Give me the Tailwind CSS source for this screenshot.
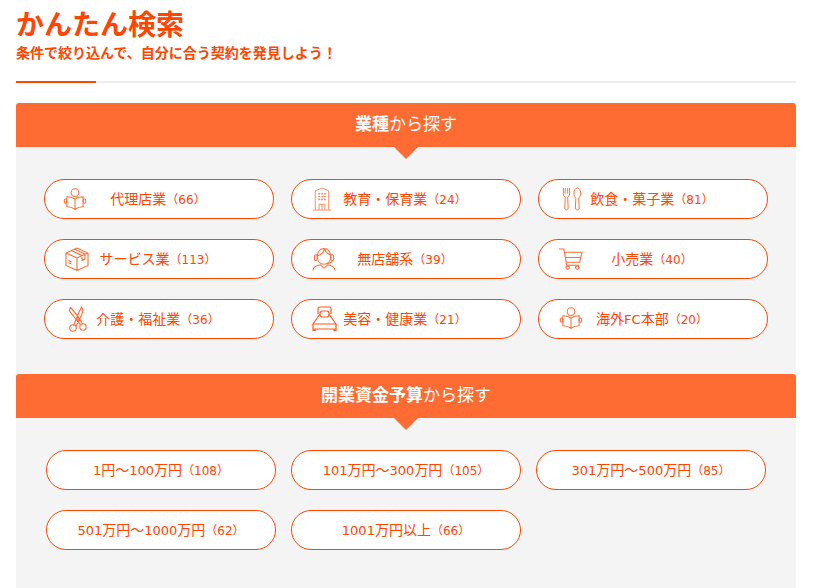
<!DOCTYPE html>
<html lang="ja">
<head>
<meta charset="UTF-8">
<title>かんたん検索</title>
<script src="https://cdn.jsdelivr.net/npm/@tailwindcss/browser@4"></script>
</head>
<body class="bg-white text-[#ff4500] font-['DejaVu_Sans','Noto_Sans_CJK_JP',sans-serif] overflow-hidden h-[588px]">
<div class="w-[780px] ml-4">

  <div class="h-[83px] border-b-2 border-[#eeeeee] relative">
    <h1 class="text-[28px] font-bold leading-[40px] pt-[6px] box-content">かんたん検索</h1>
    <p class="text-[14px] font-bold leading-[20px] mt-[-3px]">条件で絞り込んで、自分に合う契約を発見しよう！</p>
    <div class="absolute left-0 bottom-[-2px] w-20 h-0.5 bg-[#ff4500]"></div>
  </div>

  <!-- 業種 -->
  <section class="mt-5 bg-[#f4f4f4] h-[271px]">
    <div class="relative h-11 bg-[#ff6c33] rounded-t-[3px] flex items-center justify-center text-white text-[17px]">
      <p><span class="font-bold">業種</span>から探す</p>
      <div class="absolute left-1/2 -translate-x-1/2 top-full w-0 h-0 border-x-[12px] border-x-transparent border-t-[12px] border-t-[#ff6c33]"></div>
    </div>
    <div class="grid grid-cols-[230px_230px_230px] gap-x-[17px] gap-y-5 pl-7 pt-8">

      <a class="relative h-10 bg-white border border-[#ff4500] rounded-[20px] flex items-center justify-center pr-0.5 text-[14px]">
        <svg class="absolute left-[18px] top-[7px] w-6 h-6" viewBox="0 0 28 28" fill="none" stroke="#ff6c33" stroke-width="1.200"><circle cx="14" cy="6.500" r="4.500"/><path d="M14 14v12M14 14c-3-2-6-2.500-9.500-2.500v11.500c3.500 0 6.500.5 9.500 3 3-2.500 6-3 9.500-3V11.500C20 11.500 17 12 14 14z"/><rect x="1.500" y="14" width="3" height="5" rx="1.500"/><rect x="23.500" y="14" width="3" height="5" rx="1.500"/></svg>
        <span>代理店業<span class="text-[12px]">（66）</span></span>
      </a>

      <a class="relative h-10 bg-white border border-[#ff4500] rounded-[20px] flex items-center justify-center pr-0.5 text-[14px]">
        <svg class="absolute left-[20px] top-[7px] w-5 h-6" viewBox="0 0 20 25" fill="none" stroke="#ff8a5c" stroke-width="1"><path d="M3 24V4l7-3 7 3v20M0.500 24h19M7 24v-6h6v6M10 18v6"/><path d="M6 7h2M9 7h2M12 7h2M6 10h2M9 10h2M12 10h2M6 13h2M9 13h2M12 13h2" stroke-width="1.500"/></svg>
        <span>教育・保育業<span class="text-[12px]">（24）</span></span>
      </a>

      <a class="relative h-10 bg-white border border-[#ff4500] rounded-[20px] flex items-center justify-center pr-0.5 text-[14px]">
        <svg class="absolute left-[23px] top-[7px] w-5 h-6" viewBox="0 0 20 25" fill="none" stroke="#ff6c33" stroke-width="1"><path d="M1 1v6c0 2 1.500 3 2 4l-.5 11c0 2.500 3.500 2.500 3.500 0L5.500 11c.5-1 2-2 2-4V1M3 1v6M5.500 1v6"/><path d="M15.500 1c-2 0-3.500 2.500-3.500 5.500 0 2.500 1 4 2 5l-.5 10.500c0 2.500 4 2.500 4 0L17 11.500c1-1 2-2.500 2-5C19 3.500 17.500 1 15.500 1z"/></svg>
        <span>飲食・菓子業<span class="text-[12px]">（81）</span></span>
      </a>

      <a class="relative h-10 bg-white border border-[#ff4500] rounded-[20px] flex items-center justify-center pr-0.5 text-[14px]">
        <svg class="absolute left-[20px] top-[7px] w-6 h-6" viewBox="0 0 24 24" fill="none" stroke="#ff6c33" stroke-width="1.100"><path d="M1 6l11-5 11 5v12.500L12 23.500 1 18.500zM1 6l11 5 11-5M12 11v12.500M6 3.500l11 5M9 2l11 5M17 8.500v5l3-1.500V7"/><path d="M3.500 15.500l3 1.500M3.500 13.500l3 1.500"/></svg>
        <span>サービス業<span class="text-[12px]">（113）</span></span>
      </a>

      <a class="relative h-10 bg-white border border-[#ff4500] rounded-[20px] flex items-center justify-center pr-0.5 text-[14px]">
        <svg class="absolute left-[20px] top-[7px] w-6 h-6" viewBox="0 0 25 25" fill="none" stroke="#ff6c33" stroke-width="1.100"><path d="M5.500 10c0-5 3-8.500 7-8.500s7 3.500 7 8.500c0 5-3 8-7 8s-7-3-7-8zM13 2c-1 4-3 6-7 7M13 2c1 3 3 5 6 6"/><rect x="2.500" y="8" width="3" height="6" rx="1.500"/><rect x="19.500" y="8" width="3" height="6" rx="1.500"/><path d="M21 14c0 2-3 3-6 3M1 24.500c0-3 1.500-4 4-5l3.500-1 4 3.500 4-3.500 3.500 1c2.500 1 4 2 4 5"/></svg>
        <span>無店舗系<span class="text-[12px]">（39）</span></span>
      </a>

      <a class="relative h-10 bg-white border border-[#ff4500] rounded-[20px] flex items-center justify-center pr-0.5 text-[14px]">
        <svg class="absolute left-[20px] top-[8px] w-6 h-[22px]" viewBox="0 0 25 23" fill="none" stroke="#ff6c33" stroke-width="1.100"><path d="M0 1h5l3 17h13M6 4.500h18L21.500 15H7.500M7 10h15.500"/><circle cx="9" cy="20.500" r="1.800"/><circle cx="19" cy="20.500" r="1.800"/></svg>
        <span>小売業<span class="text-[12px]">（40）</span></span>
      </a>

      <a class="relative h-10 bg-white border border-[#ff4500] rounded-[20px] flex items-center justify-center pr-0.5 text-[14px]">
        <svg class="absolute left-[23px] top-[6px] w-[19px] h-[26px]" viewBox="0 0 19 26" fill="none" stroke="#ff6c33" stroke-width="1.100"><path d="M5.500 19.500C8 14 10 8 13.500 1c2 2.500 1.500 6-.5 9L8 20.500M12.500 19L1.500 5C1.500 3 2 2 2.500 1.500 6 5 10 10 14.500 18"/><circle cx="5" cy="22" r="3.200"/><circle cx="15" cy="21" r="3.200"/><circle cx="9.500" cy="13.500" r=".8"/></svg>
        <span>介護・福祉業<span class="text-[12px]">（36）</span></span>
      </a>

      <a class="relative h-10 bg-white border border-[#ff4500] rounded-[20px] flex items-center justify-center pr-0.5 text-[14px]">
        <svg class="absolute left-[20px] top-[6px] w-[25px] h-[25px]" viewBox="0 0 25 25" fill="none" stroke="#ff5a1f" stroke-width="1.200"><path d="M6 8V2.500C6 1.500 6.500 1 7.500 1h10c1 0 1.500.5 1.500 1.500V8"/><rect x="8" y="5" width="9" height="6" rx="2.500"/><path d="M8 8L1 18h23L17 8M1 18v5h23v-5M1 23v1.500h2V23M22 23v1.500h2V23"/></svg>
        <span>美容・健康業<span class="text-[12px]">（21）</span></span>
      </a>

      <a class="relative h-10 bg-white border border-[#ff4500] rounded-[20px] flex items-center justify-center pr-0.5 text-[14px]">
        <svg class="absolute left-[20px] top-[6px] w-6 h-6" viewBox="0 0 28 28" fill="none" stroke="#ff6c33" stroke-width="1.200"><circle cx="14" cy="6.500" r="4.500"/><path d="M14 14v12M14 14c-3-2-6-2.500-9.500-2.500v11.500c3.500 0 6.500.5 9.500 3 3-2.500 6-3 9.500-3V11.500C20 11.500 17 12 14 14z"/><rect x="1.500" y="14" width="3" height="5" rx="1.500"/><rect x="23.500" y="14" width="3" height="5" rx="1.500"/></svg>
        <span>海外<span class="text-[13px]">FC</span>本部<span class="text-[12px]">（20）</span></span>
      </a>
    </div>
  </section>

  <!-- 開業資金予算 -->
  <section class="bg-[#f4f4f4] h-[214px]">
    <div class="relative h-11 bg-[#ff6c33] rounded-t-[3px] flex items-center justify-center text-white text-[17px]">
      <p><span class="font-bold">開業資金予算</span>から探す</p>
      <div class="absolute left-1/2 -translate-x-1/2 top-full w-0 h-0 border-x-[12px] border-x-transparent border-t-[12px] border-t-[#ff6c33]"></div>
    </div>
    <div class="grid grid-cols-[230px_230px_230px] gap-x-[15px] gap-y-5 pl-[30px] pt-8">
      <a class="h-10 bg-white border border-[#ff4500] rounded-[20px] flex items-center justify-center text-[14px]"><span><span class="text-[13px]">1</span>円～<span class="text-[13px]">100</span>万円<span class="text-[12px]">（108）</span></span></a>
      <a class="h-10 bg-white border border-[#ff4500] rounded-[20px] flex items-center justify-center text-[14px]"><span><span class="text-[13px]">101</span>万円～<span class="text-[13px]">300</span>万円<span class="text-[12px]">（105）</span></span></a>
      <a class="h-10 bg-white border border-[#ff4500] rounded-[20px] flex items-center justify-center text-[14px]"><span><span class="text-[13px]">301</span>万円～<span class="text-[13px]">500</span>万円<span class="text-[12px]">（85）</span></span></a>
      <a class="h-10 bg-white border border-[#ff4500] rounded-[20px] flex items-center justify-center text-[14px]"><span><span class="text-[13px]">501</span>万円～<span class="text-[13px]">1000</span>万円<span class="text-[12px]">（62）</span></span></a>
      <a class="h-10 bg-white border border-[#ff4500] rounded-[20px] flex items-center justify-center text-[14px]"><span><span class="text-[13px]">1001</span>万円以上<span class="text-[12px]">（66）</span></span></a>
    </div>
  </section>
</div>
</body>
</html>
